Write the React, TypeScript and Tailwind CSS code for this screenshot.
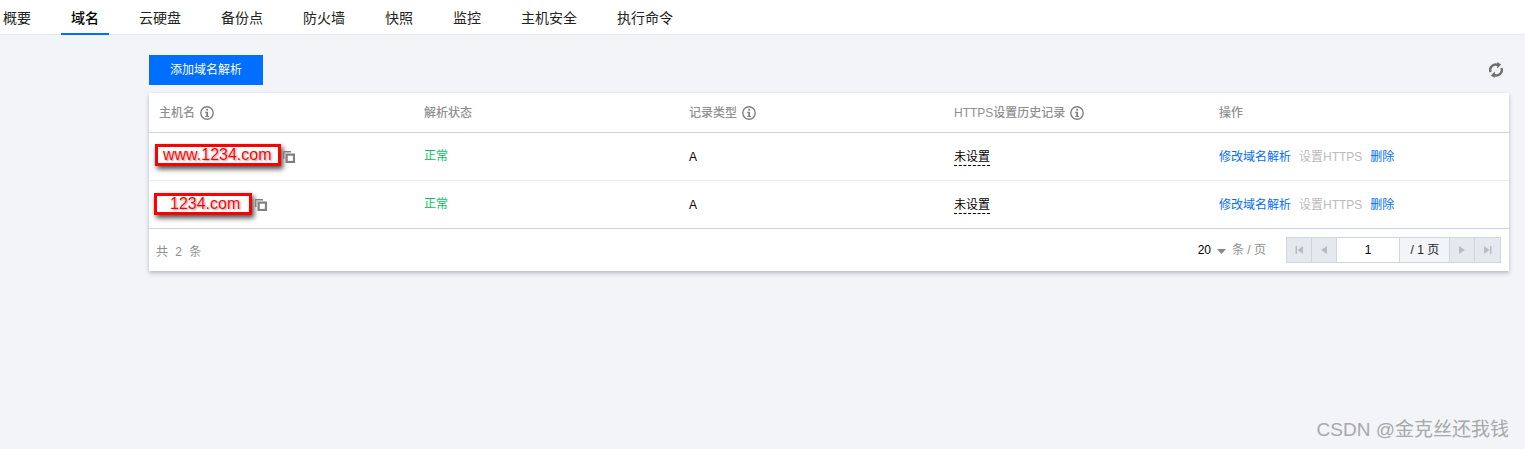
import React from "react";

const tabs = ["概要", "域名", "云硬盘", "备份点", "防火墙", "快照", "监控", "主机安全", "执行命令"];
const grid = "grid grid-cols-[265px_265px_265px_265px_1fr]";

function Info() {
  return (
    <svg width="14" height="14" viewBox="0 0 14 14" className="shrink-0 text-[#808080]">
      <circle cx="7" cy="7" r="6.2" fill="none" stroke="currentColor" strokeWidth="1.4" />
      <rect x="6.2" y="2.8" width="1.8" height="1.8" fill="currentColor" />
      <path d="M5.3 5.8H8V10H9V11H5.2V10H6.2V6.9H5.3Z" fill="currentColor" />
    </svg>
  );
}

function Copy() {
  return (
    <svg width="12" height="12" viewBox="0 0 12 12" className="shrink-0">
      <path d="M0.7 8V0.7H8" fill="none" stroke="#808080" strokeWidth="1.4" />
      <rect x="3.6" y="3.6" width="7.4" height="7.4" fill="none" stroke="#808080" strokeWidth="2.2" />
    </svg>
  );
}

function Sync() {
  return (
    <svg width="14" height="16" viewBox="0 0 14 16">
      <path d="M1.6 10A5.4 5.4 0 0 1 9.4 3.4" fill="none" stroke="#6f6f6f" strokeWidth="2.4" />
      <path d="M8.2 0L12.2 2.4L8.2 6.4Z" fill="#6f6f6f" />
      <path d="M12.4 6A5.4 5.4 0 0 1 4.6 12.6" fill="none" stroke="#6f6f6f" strokeWidth="2.4" />
      <path d="M5.8 16L1.8 13.6L5.8 9.6Z" fill="#6f6f6f" />
    </svg>
  );
}

function PageBtn({ d, last }: { d: string; last?: boolean }) {
  return (
    <div className={`w-[25px] flex items-center justify-center bg-[#e5e8ed] ${last ? "" : "border-r border-[#cfd5de]"}`}>
      <svg width="10" height="10" viewBox="0 0 10 10">
        <path d={d} fill="#b6bcc5" />
      </svg>
    </div>
  );
}

function Head({ label, info }: { label: string; info?: boolean }) {
  return (
    <div className="pl-[10px] flex items-center gap-[5px] text-[#8f8f8f] font-medium">
      <span>{label}</span>
      {info && <Info />}
    </div>
  );
}

function Row({
  host,
  cell,
  box,
  copy,
  border,
}: {
  host: string;
  cell: string;
  box: string;
  copy: string;
  border: string;
}) {
  return (
    <div className={`${grid} h-[48px] items-center border-b ${border}`}>
      <div className={`${cell} self-start flex items-start`}>
        <div
          className={`${box} h-[22px] border-[3px] border-[#f00] bg-white flex items-center text-[16px] text-[#f00] shadow-[2px_3px_5px_rgba(0,0,0,0.7)] [text-shadow:0_0_1px_#fff,1px_1px_2px_rgba(0,0,0,0.45)]`}
        >
          {host}
        </div>
        <div className={copy}>
          <Copy />
        </div>
      </div>
      <div className="pl-[10px] text-[#0abf5b] -mt-[2px]">正常</div>
      <div className="pl-[10px] text-black">A</div>
      <div className="pl-[10px]">
        <span className="text-black border-b border-dashed border-black pb-[1px]">未设置</span>
      </div>
      <div className="pl-[10px] flex gap-2">
        <span className="text-[#006eff]">修改域名解析</span>
        <span className="text-[#bbb]">设置HTTPS</span>
        <span className="text-[#006eff]">删除</span>
      </div>
    </div>
  );
}

export default function App() {
  return (
    <div className="relative w-[1525px] h-[449px] overflow-hidden bg-[#f2f4f8] text-xs font-['Liberation_Sans','Noto_Sans_CJK_SC',sans-serif]">
      <nav className="h-[35px] bg-white border-b border-[#e4e7ed] flex gap-10 pl-[3px] text-sm text-[#222]">
        {tabs.map((t, i) => (
          <div key={t} className={`relative h-[35px] flex items-center ${i === 1 ? "font-medium text-black" : ""}`}>
            {t}
            {i === 1 && <span className="absolute -left-[10px] -right-[10px] bottom-0 h-[2px] bg-[#006eff]" />}
          </div>
        ))}
      </nav>

      <main className="pl-[149px] pr-4 pt-5">
        <div className="flex items-center justify-between h-[30px]">
          <button className="w-[114px] h-[30px] bg-[#006eff] text-white text-xs">添加域名解析</button>
          <div className="mr-[6px]">
            <Sync />
          </div>
        </div>

        <section className="mt-2 bg-white shadow-[0_2px_4px_rgba(54,58,80,0.32)]">
          <div className={`${grid} h-[40px] items-center border-b border-[#cfd5de]`}>
            <Head label="主机名" info />
            <Head label="解析状态" />
            <Head label="记录类型" info />
            <Head label="HTTPS设置历史记录" info />
            <Head label="操作" />
          </div>
          <Row
            host="www.1234.com"
            cell="pl-[6px] pt-[11px]"
            box="w-[126px] pl-[5px]"
            copy="ml-[2px] mt-[7px]"
            border="border-[#e7eaef]"
          />
          <Row
            host="1234.com"
            cell="pl-[5px] pt-[12px]"
            box="w-[98px] pl-[13px]"
            copy="ml-[3px] mt-[6px]"
            border="border-[#cfd5de]"
          />
          <div className="h-[42px] flex items-center justify-between pl-[7px] pr-2 text-[#8f8f8f]">
            <span className="mt-[3px] tracking-[1px] [word-spacing:2px]">共 2 条</span>
            <div className="flex items-center">
              <span className="text-black">20</span>
              <svg width="9" height="5" viewBox="0 0 9 5" className="ml-[6px] mt-[2px]">
                <path d="M0 0H9L4.5 5Z" fill="#888" />
              </svg>
              <span className="ml-[6px] mr-5">条 / 页</span>
              <div className="flex h-[26px] w-[215px] border border-[#cfd5de]">
                <PageBtn d="M1.5 1H3V9H1.5ZM9 1V9L3.5 5Z" />
                <PageBtn d="M8 1V9L2 5Z" />
                <div className="w-[64px] bg-white border-r border-[#cfd5de] flex items-center justify-center text-black">1</div>
                <div className="w-[50px] bg-[#f2f4f8] border-r border-[#cfd5de] flex items-center justify-center text-[#222]">/ 1 页</div>
                <PageBtn d="M2 1V9L8 5Z" />
                <PageBtn d="M1 1V9L6.5 5ZM7 1H8.5V9H7Z" last />
              </div>
            </div>
          </div>
        </section>
      </main>

      <div className="absolute right-[16px] top-[419px] text-[19px] leading-[22px] text-[#a8a8a8]">CSDN @金克丝还我钱</div>
    </div>
  );
}
